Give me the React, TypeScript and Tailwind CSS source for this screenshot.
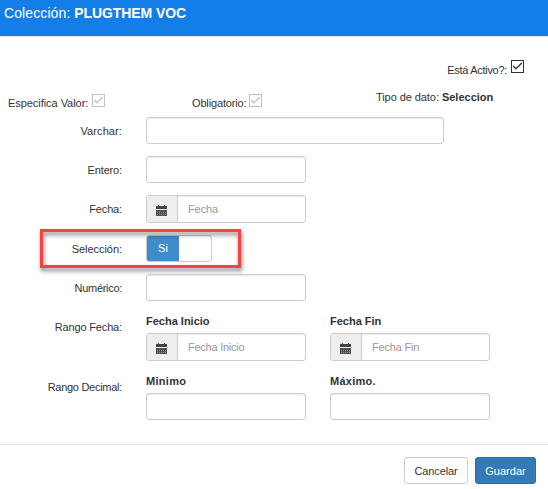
import type { ReactNode } from "react";

function Calendar() {
  return (
    <svg width="11" height="11" viewBox="0 0 11 11" shapeRendering="crispEdges" aria-hidden="true">
      <path fill="#444" d="M2 0h1v1h5V0h1v1h2v3H0V1h2z" />
      <path fill="#505050" d="M0 5h11v6H0z" />
      <path stroke="#8c8c8c" strokeWidth="1" strokeDasharray="1 1" d="M1 7.5h9M1 9.5h9" />
    </svg>
  );
}

function Check({ active = false }: { active?: boolean }) {
  return (
    <svg className="shrink-0" width="13" height="13" viewBox="0 0 13 13" fill="none" stroke={active ? "#333" : "#c0c0c0"} role="checkbox" aria-checked="true">
      <rect x="0.5" y="0.5" width="12" height="12" />
      <path d="M2.2 6 5 8.8l5.8-5.8" strokeWidth="1.3" />
    </svg>
  );
}

const box = "block rounded-[3px] border border-[#ccc] bg-white shadow-[inset_0_1px_1px_rgba(0,0,0,0.075)] outline-none";

function Field({ width = "w-[160px]", label }: { width?: string; label: string }) {
  return <input aria-label={label} className={`${box} h-[27px] ${width}`} />;
}

function DateField({ text, tracking = "" }: { text: string; tracking?: string }) {
  return (
    <div className={`${box} flex! h-7 w-[160px] overflow-hidden`}>
      <span className="flex w-[31px] shrink-0 items-center justify-center border-r border-[#ccc] bg-[#eee] pr-px pt-[3px]">
        <Calendar />
      </span>
      <input placeholder={text} className={`min-w-0 flex-1 bg-transparent pl-[10px] outline-none placeholder:text-[#999] ${tracking}`} />
    </div>
  );
}

function Row({ label, height, tracking = "", pad = "pt-[7px]", children }: { label: string; height: string; tracking?: string; pad?: string; children: ReactNode }) {
  return (
    <div className={`flex items-start ${height}`}>
      <span className={`mr-6 w-[122px] shrink-0 text-right leading-[15px] ${pad} ${tracking}`}>{label}</span>
      {children}
    </div>
  );
}

function Titled({ title, tracking = "", children }: { title: string; tracking?: string; children: ReactNode }) {
  return (
    <div className="w-[184px]">
      <div className={`mb-[5px] h-[13px] font-bold leading-[13px] ${tracking}`}>{title}</div>
      {children}
    </div>
  );
}

export default function App() {
  return (
    <div className="flex h-[489px] w-[548px] flex-col overflow-hidden bg-white font-['Liberation_Sans',Arial,sans-serif] text-[11px] text-[#333]">
      <header className="h-[37px] border-b border-[#e5e5e5] bg-[#147ee8] pl-1 pt-[5px] text-[14px] leading-[16px] text-white">
        <span className="tracking-[0.1px]">Colección: </span><b className="tracking-[-0.1px]">PLUGTHEM VOC</b>
      </header>
      <div className="flex h-[53px] justify-end pr-6 pt-[23px]">
        <div className="flex gap-1">
          <span className="pt-[3px] leading-[14px] tracking-[-0.3px]">Está Activo?:</span>
          <Check active />
        </div>
      </div>
      <div className="flex h-[27px] pl-2">
        <div className="flex w-[184px] gap-[4px] pt-1">
          <span className="w-[80px] whitespace-nowrap pt-[2px] leading-[14px] tracking-[-0.05px]">Especifica Valor:</span>
          <Check />
        </div>
        <div className="flex w-[184px] gap-[3px] pt-1">
          <span className="w-[54px] whitespace-nowrap pt-[2px] leading-[14px] tracking-[-0.15px]">Obligatorio:</span>
          <Check />
        </div>
        <div className="leading-[14px]"><span className="tracking-[-0.07px]">Tipo de dato: </span><b>Seleccion</b></div>
      </div>
      <main className="h-[327px]">
        <Row label="Varchar:" height="h-[39px]" tracking="tracking-[0.1px]"><Field label="Varchar" width="w-[298px]" /></Row>
        <Row label="Entero:" height="h-[39px]" tracking="tracking-[-0.15px]"><Field label="Entero" /></Row>
        <Row label="Fecha:" height="h-[40px]" tracking="tracking-[-0.15px]"><DateField text="Fecha" tracking="tracking-[-0.1px]" /></Row>
        <div className="relative">
          <Row label="Selección:" height="h-[39px]" tracking="tracking-[-0.05px]">
            <div className="flex h-[27px] w-[66px] overflow-hidden rounded-[3px] border border-[#ccc]">
              <span className="flex w-8 items-center justify-center bg-[#428bca] text-white">Si</span>
            </div>
          </Row>
          <div className="pointer-events-none absolute -top-[6px] left-10 h-[39px] w-[201px] border-[3px] border-[#fa4040] drop-shadow-[1px_3px_2px_rgba(0,0,0,0.5)]" />
        </div>
        <Row label="Numérico:" height="h-[41px]" tracking="tracking-[-0.3px]"><Field label="Numérico" /></Row>
        <Row label="Rango Fecha:" height="h-[60px]" pad="pt-[5px]" tracking="tracking-[-0.15px]">
          <div className="flex">
            <Titled title="Fecha Inicio"><DateField text="Fecha Inicio" tracking="tracking-[-0.25px]" /></Titled>
            <Titled title="Fecha Fin"><DateField text="Fecha Fin" tracking="tracking-[-0.2px]" /></Titled>
          </div>
        </Row>
        <Row label="Rango Decimal:" height="h-[69px]" pad="pt-[5px]" tracking="tracking-[-0.28px]">
          <div className="flex">
            <Titled title="Minimo" tracking="tracking-[0.3px]"><Field label="Minimo" /></Titled>
            <Titled title="Máximo." tracking="tracking-[0.25px]"><Field label="Máximo" /></Titled>
          </div>
        </Row>
      </main>
      <footer className="flex h-[45px] justify-end gap-[7px] border-t border-[#e5e5e5] pr-3 pt-3">
        <button className="h-[27px] w-16 rounded-[3px] border border-[#ccc] bg-white pt-px tracking-[-0.1px]">Cancelar</button>
        <button className="h-[27px] w-[61px] rounded-[3px] border border-[#2e6da4] bg-[#337ab7] pt-px text-white">Guardar</button>
      </footer>
    </div>
  );
}
